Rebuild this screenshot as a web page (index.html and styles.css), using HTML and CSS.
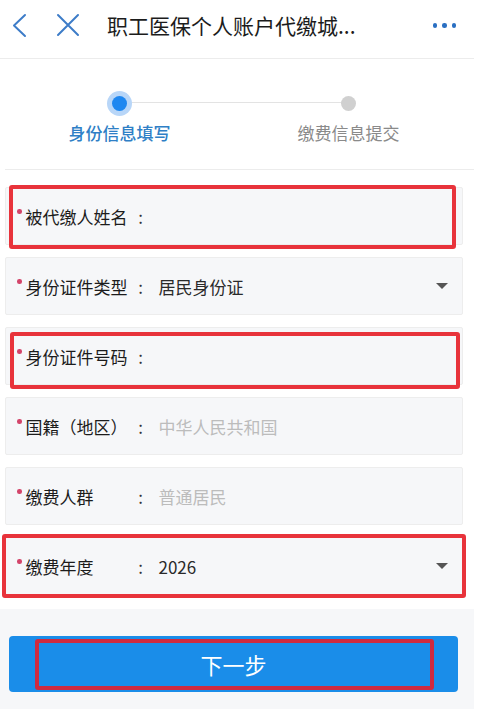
FILE: index.html
```html
<!DOCTYPE html>
<html lang="zh-CN">
<head>
<meta charset="utf-8">
<title>职工医保个人账户代缴城乡居民医保</title>
<link rel="stylesheet" href="styles.css">
</head>
<body>
<header class="topbar">
  <svg class="icon back" width="40" height="58" viewBox="0 0 40 58"><polyline points="25,15 14,25.5 25,36" fill="none" stroke="#3d7cc8" stroke-width="2" stroke-linecap="round" stroke-linejoin="round"/></svg>
  <svg class="icon close" width="40" height="58" viewBox="0 0 40 58"><path d="M8 15 L28 35 M28 15 L8 35" fill="none" stroke="#3d7cc8" stroke-width="2" stroke-linecap="round"/></svg>
  <h1 class="title">职工医保个人账户代缴城...</h1>
  <div class="more"><span></span><span></span><span></span></div>
</header>

<section class="steps">
  <div class="step active">
    <div class="dot-row"><span class="dot"></span></div>
    <div class="step-label">身份信息填写</div>
  </div>
  <div class="step">
    <div class="dot-row"><span class="dot"></span></div>
    <div class="step-label">缴费信息提交</div>
  </div>
  <span class="step-line"></span>
</section>

<main class="form">
  <div class="field">
    <span class="req"></span><span class="label">被代缴人姓名</span><span class="colon">:</span>
    <span class="mark mark-1"></span>
  </div>
  <div class="field">
    <span class="req"></span><span class="label">身份证件类型</span><span class="colon">:</span>
    <span class="value">居民身份证</span>
    <span class="caret"></span>
  </div>
  <div class="field">
    <span class="req"></span><span class="label">身份证件号码</span><span class="colon">:</span>
    <span class="mark mark-3"></span>
  </div>
  <div class="field">
    <span class="req"></span><span class="label">国籍（地区）</span><span class="colon">:</span>
    <span class="value muted">中华人民共和国</span>
  </div>
  <div class="field">
    <span class="req"></span><span class="label">缴费人群</span><span class="colon">:</span>
    <span class="value muted">普通居民</span>
  </div>
  <div class="field">
    <span class="req"></span><span class="label">缴费年度</span><span class="colon">:</span>
    <span class="value">2026</span>
    <span class="caret"></span>
    <span class="mark mark-6"></span>
  </div>
</main>

<footer class="actions">
  <button class="next" type="button">下一步<span class="mark mark-btn"></span></button>
</footer>
</body>
</html>
```

FILE: styles.css
```css
* { box-sizing: border-box; }

html, body {
  margin: 0;
  padding: 0;
  background: #ffffff;
  font-family: "Noto Sans CJK SC", "Noto Sans", sans-serif;
  color: #1f1f1f;
}

.topbar {
  height: 59px;
  display: flex;
  align-items: flex-start;
  border-bottom: 1px solid #ececec;
  width: 474px;
}

.icon { display: block; flex: none; }
.back { margin-left: 0; }
.close { margin-left: 10px; width: 40px; }

.title {
  margin: 0 0 0 17px;
  font-size: 21px;
  font-weight: 400;
  line-height: 50px;
  color: #1c1c1c;
  white-space: nowrap;
  flex: 1;
}

.more {
  display: flex;
  gap: 5px;
  margin: 23px 18px 0 0;
}
.more span {
  width: 4.5px;
  height: 4.5px;
  border-radius: 50%;
  background: #2a6fc2;
}

.steps {
  position: relative;
  display: grid;
  grid-template-columns: 229px 229px;
  margin-left: 5px;
  width: 469px;
  height: 111px;
  border-bottom: 1px solid #ececec;
}

.step { display: flex; flex-direction: column; align-items: center; }
.dot-row {
  height: 24px;
  margin-top: 32px;
  display: flex;
  align-items: center;
  justify-content: center;
  position: relative;
  z-index: 1;
}
.step .dot {
  width: 15px;
  height: 15px;
  border-radius: 50%;
  background: #d0d0d0;
}
.step.active .dot {
  width: 15px;
  height: 15px;
  background: #1e87f0;
  box-shadow: 0 0 0 5px #b8d6f8;
}
.step-label {
  margin-top: 6px;
  font-size: 17px;
  line-height: 24px;
  color: #8a8a8a;
}
.step.active .step-label { color: #2f7fc6; font-weight: 500; }

.step-line {
  position: absolute;
  left: 126px;
  width: 218px;
  top: 43px;
  height: 1px;
  background: #e3e3e3;
}

.form {
  display: flex;
  flex-direction: column;
  gap: 12px;
  padding: 17px 0 0 5px;
}

.field {
  position: relative;
  width: 458px;
  height: 58px;
  display: flex;
  align-items: center;
  background: #f6f7f9;
  border: 1px solid #ededed;
  border-radius: 2px;
  padding-left: 11px;
  font-size: 17px;
}

.req {
  width: 4.5px;
  height: 4.5px;
  border-radius: 50%;
  background: #d3456a;
  margin-top: -9px;
  margin-right: 4px;
  flex: none;
}
.label {
  width: 109px;
  color: #1c1c1c;
  white-space: nowrap;
  flex: none;
}
.colon {
  width: 12px;
  text-align: center;
  color: #333;
  flex: none;
}
.value {
  margin-left: 12px;
  color: #2a2a2a;
}
.value.muted { color: #bcbcbc; }

.caret {
  position: absolute;
  right: 14px;
  top: 25px;
  width: 0;
  height: 0;
  border-left: 6px solid transparent;
  border-right: 6px solid transparent;
  border-top: 6px solid #555;
}

.mark {
  position: absolute;
  border: 4px solid #e8333b;
  border-radius: 3px;
  pointer-events: none;
}
.mark-1 { left: 3px; right: 6px; top: -3px; bottom: -5px; }
.mark-3 { left: 4px; right: 2px; top: 4px; bottom: -5px; }
.mark-6 { left: -4px; right: -4px; top: -4px; bottom: -4px; }

.actions {
  margin-top: 14px;
  width: 474px;
  height: 100px;
  background: #f6f7f9;
  padding: 27px 0 0 9px;
}

.next {
  position: relative;
  display: block;
  width: 449px;
  height: 56px;
  border: 0;
  border-radius: 4px;
  background: #1a8de9;
  color: #ffffff;
  font-family: "Noto Sans CJK SC", "Noto Sans", sans-serif;
  font-size: 22px;
  padding: 0;
  cursor: pointer;
}
.mark-btn {
  left: 26px;
  right: 24px;
  top: 3px;
  bottom: 2px;
  border-color: #cf2a3f;
}
```
